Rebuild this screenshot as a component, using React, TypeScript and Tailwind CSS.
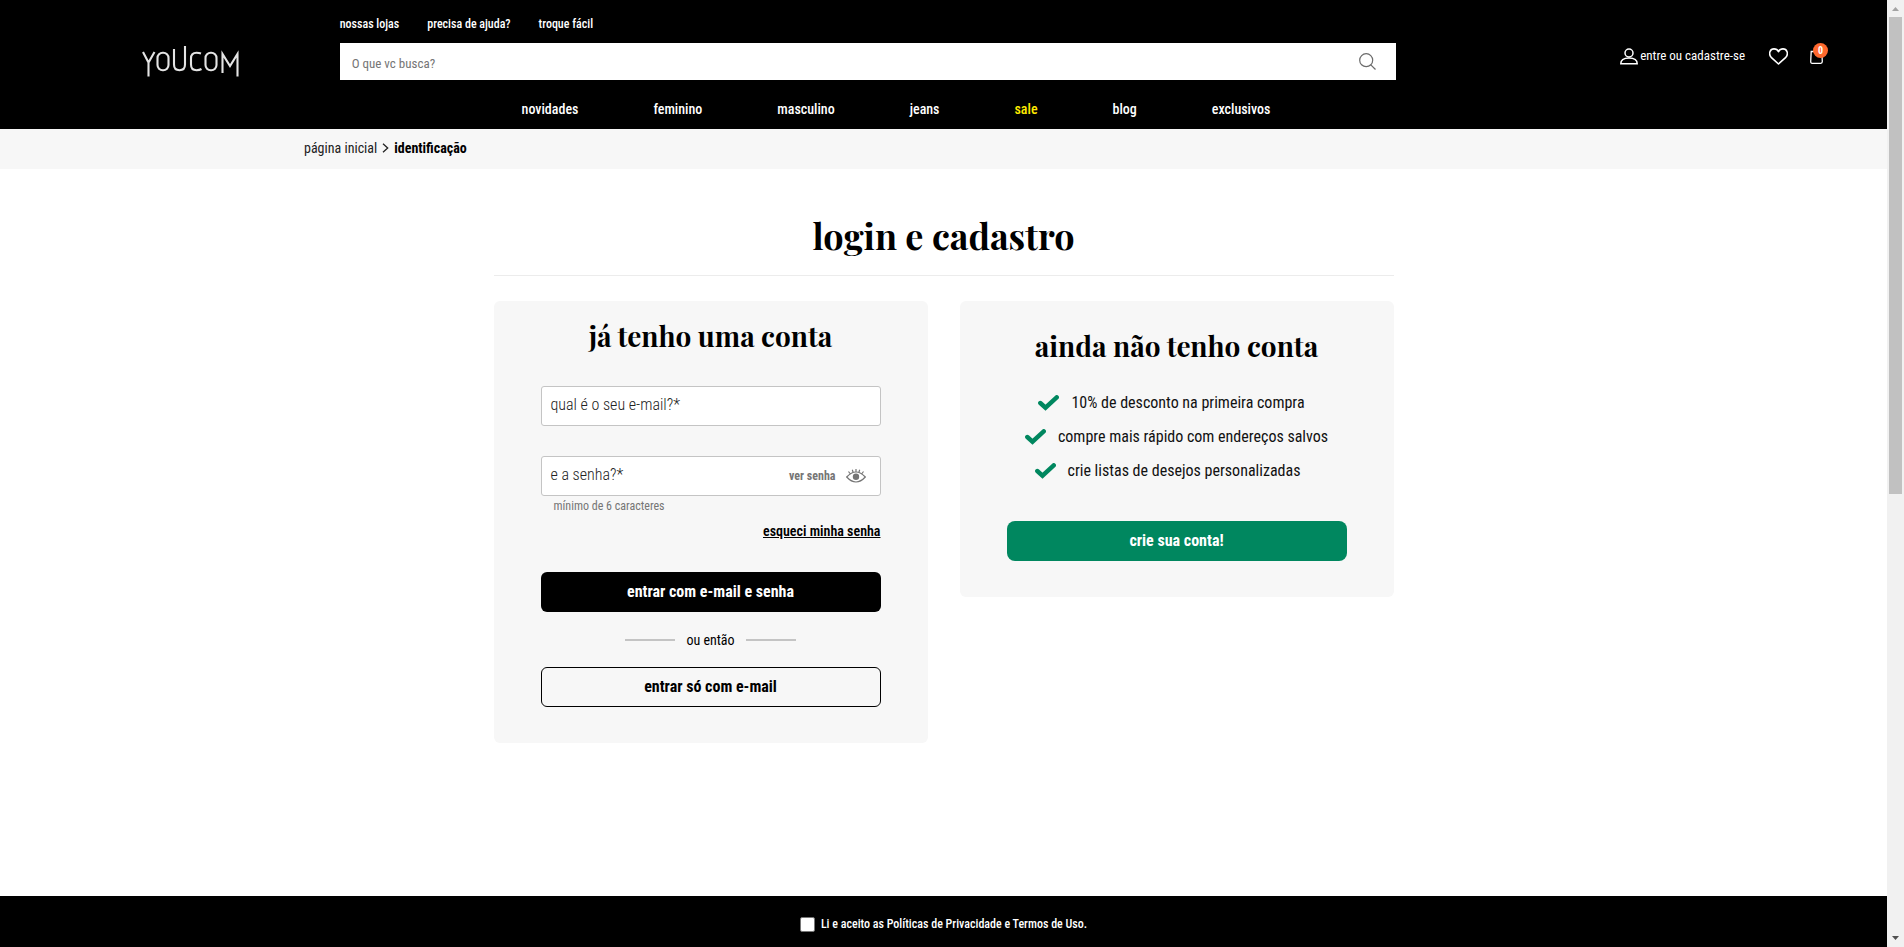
const topLinks = ["nossas lojas", "precisa de ajuda?", "troque fácil"];
const menu = ["novidades", "feminino", "masculino", "jeans", "sale", "blog", "exclusivos"];
const benefits = [
  { text: "10% de desconto na primeira compra", pad: "pr-[10px]" },
  { text: "compre mais rápido com endereços salvos", pad: "pr-0" },
  { text: "crie listas de desejos personalizadas", pad: "pr-[18px]" },
];

function Logo() {
  return (
    <svg viewBox="0 0 97 31" className="h-[31px] w-[97px]" fill="none" stroke="#e4e4e4" strokeWidth="2.100" role="img" aria-label="Youcom">
      <path d="M1 6 L6.500 16.500 L12.500 6 M6.500 16 V30.500" />
      <rect x="15.500" y="6.800" width="11" height="17.400" rx="5.200" />
      <path d="M32 3 V18.500 Q32 24.200 37.500 24.200 Q43 24.200 43 18.500 V0" />
      <path d="M59 7.500 Q57 6.800 54.500 6.800 Q49 6.800 49 12.500 V18.500 Q49 24.200 54.500 24.200 Q57.500 24.200 59.500 23" />
      <rect x="63.500" y="6.800" width="11" height="17.400" rx="5.200" />
      <path d="M80.500 27 V8 L88 20 L95.500 8 V30.500" />
    </svg>
  );
}

function Header() {
  return (
    <header className="grid grid-cols-[18%_56%_26%] bg-black pb-3 text-white">
      <a href="#" className="pt-[46px] pl-[142px]">
        <Logo />
      </a>
      <div className="pt-4">
        <nav aria-label="Ajuda" className="flex gap-7 text-xs leading-4 font-medium">
          {topLinks.map((l) => (
            <a key={l} href="#">{l}</a>
          ))}
        </nav>
        <form className="mt-[11px] flex h-[37px] items-center bg-white pr-5 pl-3" onSubmit={(e) => e.preventDefault()}>
          <input type="search" aria-label="Buscar" placeholder="O que vc busca?" className="min-w-0 flex-1 pt-1 text-[13px] text-black outline-none placeholder:text-[#757575]" />
          <button type="submit" aria-label="Buscar">
            <svg viewBox="0 0 17 17" className="size-[17px]" fill="none" stroke="#6b6b6b" strokeWidth="1.2">
              <circle cx="7.200" cy="7.200" r="6.500" />
              <path d="M11.800 11.800 L16.500 16.500" />
            </svg>
          </button>
        </form>
        <nav aria-label="Departamentos" className="mt-[21px] flex justify-center gap-[75px] pl-14 text-sm leading-4 font-medium">
          {menu.map((m) => (
            <a key={m} href="#" className={m === "sale" ? "text-[#ffeb00]" : ""}>{m}</a>
          ))}
        </nav>
      </div>
      <div className="flex items-start justify-end pt-[46px] pr-16">
        <a href="#" className="flex items-center gap-[2px] text-[13px] leading-5">
          <svg viewBox="0 0 18 17" className="h-[17px] w-[18px]" fill="none" stroke="currentColor" strokeWidth="1.500">
            <circle cx="9" cy="5" r="4" />
            <path d="M0.800 15.800 C0.800 12 4 10 9 10 S17.200 12 17.200 15.800 Z" />
          </svg>
          entre ou cadastre-se
        </a>
        <a href="#" aria-label="Favoritos" className="ml-6 pt-[2px]">
          <svg viewBox="0 0 19 17" className="h-[17px] w-[19px]" fill="none" stroke="currentColor" strokeWidth="1.600" strokeLinejoin="round">
            <path d="M9.500 16 L2.200 9.300 C-1 5.500 1.200 0.900 5 0.900 C7.200 0.900 8.700 2 9.500 3.700 C10.300 2 11.800 0.900 14 0.900 C17.800 0.900 20 5.500 16.800 9.300 Z" />
          </svg>
        </a>
        <a href="#" aria-label="Sacola" className="relative ml-[22px] pt-1">
          <svg viewBox="0 0 13 14" className="h-[14px] w-[13px]" fill="none" stroke="currentColor" strokeWidth="1.300">
            <path d="M1.200 1.500 H11.800 L12.300 11.500 Q12.300 13.300 10.800 13.300 H2.200 Q0.700 13.300 0.700 11.500 Z" />
          </svg>
          <span className="absolute -top-[3px] left-[3px] flex size-[15px] items-center justify-center rounded-full bg-[#ff692e] text-[10px] font-bold">0</span>
        </a>
      </div>
    </header>
  );
}

function Check() {
  return (
    <svg viewBox="0 0 21 16" className="h-4 w-[21px]" fill="none" stroke="#00875f" strokeWidth="4.400" strokeLinecap="round">
      <path d="M2.300 8 L7.500 12.700 L18.700 2.300" strokeLinejoin="miter" />
    </svg>
  );
}

const fieldText = "col-start-1 row-start-1 text-base leading-6 font-light";

function LoginCard() {
  return (
    <form className="flex flex-1 flex-col rounded-md bg-[#f7f7f7] px-[47px] pt-[15px] pb-9" onSubmit={(e) => e.preventDefault()}>
      <h2 className="text-center font-['Playfair_Display','Liberation_Serif',serif] text-[28px] leading-10 font-bold">já tenho uma conta</h2>
      <div className="mt-[30px] grid h-10 content-center rounded-[3px] border border-[#c4c4c4] bg-white px-[9px] pb-[2px]">
        <input id="email" type="email" className={`${fieldText} w-full bg-transparent outline-none`} />
        <label htmlFor="email" className={`${fieldText} text-[#222]`}>qual é o seu e-mail?*</label>
      </div>
      <div className="mt-[30px] flex h-10 items-center rounded-[3px] border border-[#c4c4c4] bg-white pr-[14px] pl-[9px]">
        <div className="grid min-w-0 flex-1 pb-[2px]">
          <input id="senha" type="password" className={`${fieldText} w-full bg-transparent outline-none`} />
          <label htmlFor="senha" className={`${fieldText} text-[#222]`}>e a senha?*</label>
        </div>
        <button type="button" className="flex items-center gap-[10px] text-xs font-bold text-[#757575]">
          ver senha
          <svg viewBox="0 0 20 14" className="h-[14px] w-5" fill="none" stroke="currentColor" strokeWidth="1.200">
            <path d="M0.700 8 Q10 -2 19.300 8 Q10 18 0.700 8 Z M4 4.500 L2.500 2.500 M7 3 L6.300 0.800 M10 2.500 V0 M13 3 L13.700 0.800 M16 4.500 L17.500 2.500" />
            <circle cx="10" cy="7.800" r="3.200" fill="currentColor" stroke="none" />
          </svg>
        </button>
      </div>
      <p className="mt-[2px] pl-[13px] text-xs leading-4 text-[#757575]">mínimo de 6 caracteres</p>
      <a href="#" className="mt-[7px] self-end text-sm leading-5 font-semibold underline">esqueci minha senha</a>
      <button type="submit" className="mt-[31px] h-10 rounded-md bg-black text-base font-bold text-white">entrar com e-mail e senha</button>
      <div className="mt-[18px] mb-[17px] flex items-center justify-center gap-[11px] text-sm leading-5">
        <span className="h-[2px] w-[50px] bg-[#c4c4c4]" />
        ou então
        <span className="h-[2px] w-[50px] bg-[#c4c4c4]" />
      </div>
      <button type="button" className="h-10 rounded-md border border-black text-base font-bold">entrar só com e-mail</button>
    </form>
  );
}

function SignupCard() {
  return (
    <section className="flex flex-1 flex-col rounded-md bg-[#f7f7f7] px-[47px] pt-[25px] pb-9">
      <h2 className="text-center font-['Playfair_Display','Liberation_Serif',serif] text-[28px] leading-10 font-bold">ainda não tenho conta</h2>
      <ul className="mt-[25px] flex flex-col items-center gap-[10px] text-base leading-6">
        {benefits.map(({ text, pad }) => (
          <li key={text} className={`flex items-center gap-3 whitespace-nowrap text-[#111] ${pad}`}>
            <Check />
            {text}
          </li>
        ))}
      </ul>
      <button type="button" className="mt-[38px] h-10 rounded-lg bg-[#00875f] text-base font-bold text-white">crie sua conta!</button>
    </section>
  );
}

function ScrollTrack() {
  return (
    <aside aria-hidden="true" className="sticky top-0 flex h-screen w-[17px] shrink-0 flex-col items-center justify-between bg-[#f1f1f1]">
      <svg viewBox="0 0 17 17" className="size-[17px] shrink-0" fill="#a3a3a3"><path d="M5 11 L8.500 7 L12 11 Z" /></svg>
      <div className="flex w-[13px] flex-1 flex-col">
        <div className="h-[52.3%] bg-[#c1c1c1]" />
      </div>
      <svg viewBox="0 0 17 17" className="size-[17px] shrink-0" fill="#505050"><path d="M5 6 L8.500 10 L12 6 Z" /></svg>
    </aside>
  );
}

export default function App() {
  return (
    <div className="flex bg-white font-['Roboto_Condensed','Liberation_Sans_Narrow','Liberation_Sans',sans-serif] text-black">
      <div className="flex min-h-screen min-w-0 flex-1 flex-col">
        <Header />
        <nav aria-label="Trilha" className="flex h-10 items-center gap-[5px] bg-[#f7f7f7] pb-[2px] pl-[304px] text-sm">
          <a href="#" className="text-[#222]">página inicial</a>
          <svg viewBox="0 0 7 10" className="h-[10px] w-[7px]" fill="none" stroke="#222" strokeWidth="1.300"><path d="M1 0.700 L5.700 5 L1 9.300" /></svg>
          <span className="font-bold">identificação</span>
        </nav>
        <main className="mx-auto w-full max-w-[900px] flex-1 pt-[42px]">
          <h1 className="border-b border-[#ececec] pb-4 text-center font-['Playfair_Display','Liberation_Serif',serif] text-[36px] leading-[48px] font-bold">login e cadastro</h1>
          <div className="mt-[25px] flex items-start gap-8">
            <LoginCard />
            <SignupCard />
          </div>
        </main>
        <footer className="flex justify-center bg-black pt-[18px] pb-[13px] text-white">
          <label className="flex items-center gap-[6px] text-xs leading-5 font-medium">
            <input type="checkbox" className="size-[15px] appearance-none rounded-[2px] border border-[#767676] bg-white" />
            Li e aceito as Políticas de Privacidade e Termos de Uso.
          </label>
        </footer>
      </div>
      <ScrollTrack />
    </div>
  );
}
